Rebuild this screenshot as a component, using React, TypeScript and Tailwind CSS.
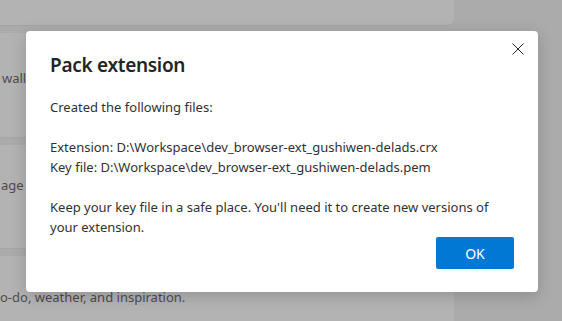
const font = { fontFamily: '"Noto Sans", "Open Sans", sans-serif' }

function Card({ h, children }: { h: string; children?: React.ReactNode }) {
  return (
    <div className={`${h} w-[454px] bg-[#b3b3b3] rounded-r-md border-b border-[#a6a6a6] overflow-hidden flex items-center`}>
      {children}
    </div>
  )
}

export default function App() {
  return (
    <div className="relative w-[562px] h-[321px] overflow-hidden bg-[#ababab]" style={font}>
      {/* page behind the overlay */}
      <div className="flex flex-col gap-[7px]">
        <div className="h-[26px] w-[454px] bg-[#b3b3b3] rounded-br-md border-b border-[#a3a3a3]" />
        <Card h="h-[105px]">
          <span className="text-[13px] text-[#4d4d4d] pl-[2px] -mt-[12px]">wallpaper images</span>
        </Card>
        <Card h="h-[104px]">
          <span className="text-[13px] text-[#4d4d4d] pl-[1px] -mt-[22px]">age</span>
        </Card>
        <div className="h-[80px] w-[454px] bg-[#b3b3b3] rounded-tr-md pt-[32px]">
          <span className="text-[13px] text-[#4d4d4d] block">o-do, weather, and inspiration.</span>
        </div>
      </div>

      {/* dialog */}
      <div className="absolute left-[26px] top-[31px] w-[512px] bg-white rounded-[4px] shadow-[0_4px_16px_rgba(0,0,0,0.18)] px-6 pt-5 pb-[23px]">
        <button className="absolute right-[14px] top-[12px] w-3 h-3 text-[#242424]">
          <svg width="12" height="12" viewBox="0 0 12 12" fill="none" stroke="currentColor" strokeWidth="1">
            <path d="M0.5 0.5L11.5 11.5M11.5 0.5L0.5 11.5" />
          </svg>
        </button>
        <h1 className="text-[19px] leading-[28px] font-semibold tracking-[-0.3px] text-[#242424]">Pack extension</h1>
        <div className="mt-[18px] text-[13px] leading-[20px] text-[#323130]">
          <p>Created the following files:</p>
          <p>&nbsp;</p>
          <p>Extension: D:\Workspace\dev_browser-ext_gushiwen-delads.crx</p>
          <p>Key file: D:\Workspace\dev_browser-ext_gushiwen-delads.pem</p>
          <p>&nbsp;</p>
          <p>Keep your key file in a safe place. You'll need it to create new versions of your extension.</p>
        </div>
        <div className="flex justify-end">
          <button className="w-[78px] h-8 bg-[#0078d4] text-white text-[14px] rounded-[2px]">OK</button>
        </div>
      </div>
    </div>
  )
}
